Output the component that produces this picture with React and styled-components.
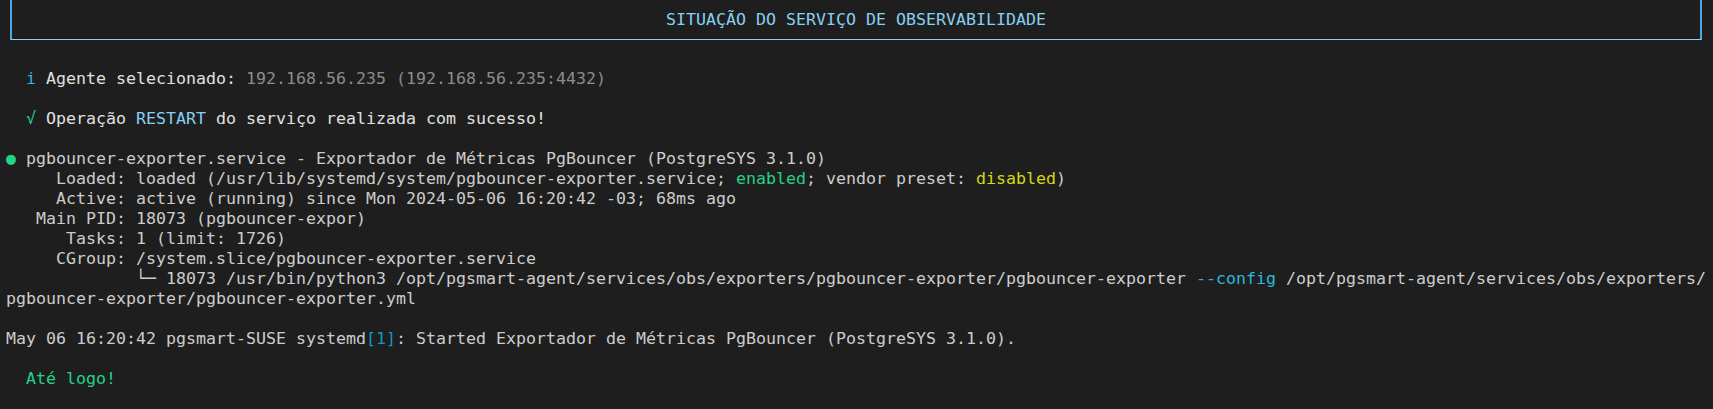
import React from 'react'
import styled, { createGlobalStyle } from 'styled-components'

const GlobalStyle = createGlobalStyle`
  html, body {
    margin: 0;
    padding: 0;
    background: #1e1e1e;
  }
`

const Screen = styled.div`
  width: 1713px;
  height: 409px;
  overflow: hidden;
  box-sizing: border-box;
  padding-left: 6px;
  background: #1e1e1e;
  color: #cccccc;
  font-family: "DejaVu Sans Mono", "Liberation Mono", monospace;
  font-size: 16.61px;
`

const Header = styled.div`
  height: 49px;
`

const Box = styled.div`
  box-sizing: border-box;
  margin-left: 4px;
  width: 1692px;
  height: 40px;
  border-left: 2px solid #4fa6e6;
  border-right: 2px solid #4fa6e6;
  border-bottom: 1px solid #8dcff0;
  display: flex;
  align-items: center;
  justify-content: center;
`

const Title = styled.span`
  color: #86d0f2;
  white-space: pre;
  line-height: 20px;
`

const Output = styled.div`
  display: flex;
  flex-direction: column;
`

const Line = styled.div`
  height: 20px;
  line-height: 20px;
  white-space: pre;
`

const Tone = styled.span`
  color: ${props => props.$c};
`

const Dot = styled.span`
  display: inline-block;
  width: 10px;
  text-align: center;
  color: #23d18b;
`

const colors = {
  info: '#3aaee0',
  ok: '#23d18b',
  dim: '#8c8c8c',
  light: '#86d0f2',
  green: '#23d18b',
  yellow: '#d6d616',
  cyan: '#29b8db',
  darkCyan: '#1199c4',
  white: '#e0e0e0'
}

const App = () => {
  return (
    <>
      <GlobalStyle />
      <Screen>
        <Header>
          <Box>
            <Title>SITUAÇÃO DO SERVIÇO DE OBSERVABILIDADE</Title>
          </Box>
        </Header>
        <Output>
          <Line> </Line>
          <Line>  <Tone $c={colors.info}>i</Tone> <Tone $c={colors.white}>Agente selecionado:</Tone> <Tone $c={colors.dim}>192.168.56.235 (192.168.56.235:4432)</Tone></Line>
          <Line> </Line>
          <Line>  <Tone $c={colors.ok}>√</Tone> <Tone $c={colors.white}>Operação </Tone><Tone $c={colors.light}>RESTART</Tone><Tone $c={colors.white}> do serviço realizada com sucesso!</Tone></Line>
          <Line> </Line>
          <Line><Dot>●</Dot> pgbouncer-exporter.service - Exportador de Métricas PgBouncer (PostgreSYS 3.1.0)</Line>
          <Line>     Loaded: loaded (/usr/lib/systemd/system/pgbouncer-exporter.service; <Tone $c={colors.green}>enabled</Tone>; vendor preset: <Tone $c={colors.yellow}>disabled</Tone>)</Line>
          <Line>     Active: active (running) since Mon 2024-05-06 16:20:42 -03; 68ms ago</Line>
          <Line>   Main PID: 18073 (pgbouncer-expor)</Line>
          <Line>      Tasks: 1 (limit: 1726)</Line>
          <Line>     CGroup: /system.slice/pgbouncer-exporter.service</Line>
          <Line>             └─ 18073 /usr/bin/python3 /opt/pgsmart-agent/services/obs/exporters/pgbouncer-exporter/pgbouncer-exporter <Tone $c={colors.cyan}>--config</Tone> /opt/pgsmart-agent/services/obs/exporters/</Line>
          <Line>pgbouncer-exporter/pgbouncer-exporter.yml</Line>
          <Line> </Line>
          <Line>May 06 16:20:42 pgsmart-SUSE systemd<Tone $c={colors.darkCyan}>[1]</Tone>: Started Exportador de Métricas PgBouncer (PostgreSYS 3.1.0).</Line>
          <Line> </Line>
          <Line>  <Tone $c={colors.ok}>Até logo!</Tone></Line>
        </Output>
      </Screen>
    </>
  )
}

export default App
